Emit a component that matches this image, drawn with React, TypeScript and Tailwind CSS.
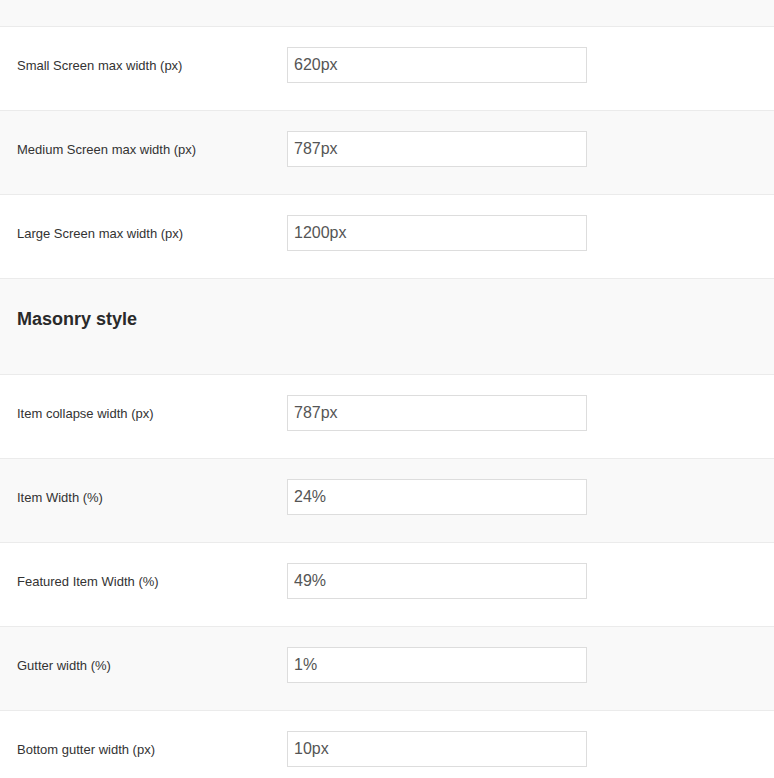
const rows1 = [
    {label: "Small Screen max width (px)", value: "620px"},
    {label: "Medium Screen max width (px)", value: "787px"},
    {label: "Large Screen max width (px)", value: "1200px"},
];

const rows2 = [
    {label: "Item collapse width (px)", value: "787px"},
    {label: "Item Width (%)", value: "24%"},
    {label: "Featured Item Width (%)", value: "49%"},
    {label: "Gutter width (%)", value: "1%"},
    {label: "Bottom gutter width (px)", value: "10px"},
];

function Row(props: {label: string, value: string, gray: boolean}) {
    return <div className={"flex flex-row items-start h-[84px] pt-5 border-b border-[#ebebeb] " + (props.gray ? "bg-[#f9f9f9]" : "bg-white")}>
        <div className="w-[287px] pl-[17px] pt-[11px] text-[13px] leading-4 text-[#333]">{props.label}</div>
        <input
            className="w-[300px] h-9 px-[6px] border border-[#dddddd] bg-white text-base text-[#555] outline-none"
            defaultValue={props.value}
        />
    </div>
}

export default function App() {
    return <div className="w-[774px] h-[778px] overflow-hidden bg-white" style={{fontFamily: '"Liberation Sans", Arial, sans-serif'}}>
        <div className="h-[27px] bg-[#f9f9f9] border-b border-[#ebebeb]"></div>
        {rows1.map((r, i) => <Row key={r.label} label={r.label} value={r.value} gray={i % 2 === 1} />)}
        <div className="h-[96px] bg-[#f9f9f9] border-b border-[#ebebeb] pl-[17px] pt-[26px]">
            <div className="text-lg font-bold text-[#2a2a2a]">Masonry style</div>
        </div>
        {rows2.map((r, i) => <Row key={r.label} label={r.label} value={r.value} gray={i % 2 === 1} />)}
    </div>
}
